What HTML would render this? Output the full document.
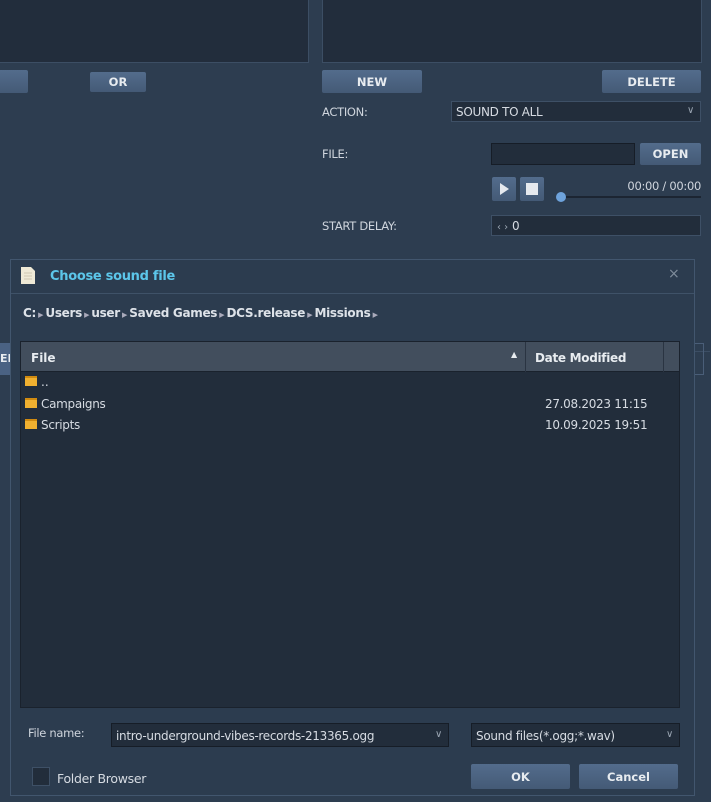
<!DOCTYPE html>
<html><head><meta charset="utf-8"><style>
*{box-sizing:border-box;margin:0;padding:0}
body{width:711px;height:802px;background:#2d3d50;font-family:"DejaVu Sans","Liberation Sans",sans-serif;font-size:12px;color:#d6dbe2;position:relative;overflow:hidden}
.a{position:absolute}
.panel{background:#222d3c;border:1px solid #3c4e64}
.btn{background:linear-gradient(#536c8c,#445a76);border-radius:2px;color:#e8ecf0;font-weight:bold;font-size:11.5px;display:flex;align-items:center;justify-content:center}
.lbl{font-size:11.5px;color:#cfd5dd}
.inp{background:#222d3b;border:1px solid #3e5066}
.chev{position:absolute;right:6px;top:3px;font-size:10px;color:#9aa5b2}
.n{letter-spacing:-0.3px}
</style></head><body>
<div class="a panel" style="left:-2px;top:-2px;width:311px;height:65px"></div>
<div class="a panel" style="left:322px;top:-2px;width:380px;height:65px"></div>
<div class="a btn" style="left:-4px;top:70px;width:32px;height:23px"></div>
<div class="a btn" style="left:90px;top:72px;width:56px;height:20px">OR</div>
<div class="a btn" style="left:322px;top:70px;width:100px;height:23px">NEW</div>
<div class="a btn" style="left:602px;top:70px;width:99px;height:23px">DELETE</div>
<div class="a lbl n" style="left:322px;top:105px">ACTION:</div>
<div class="a inp n" style="left:451px;top:101px;width:250px;height:21px;padding:3px 4px;font-size:12px">SOUND TO ALL<span class="chev">∨</span></div>
<div class="a lbl n" style="left:322px;top:147px">FILE:</div>
<div class="a inp" style="left:491px;top:143px;width:144px;height:22px;border-color:#161d27"></div>
<div class="a btn" style="left:640px;top:143px;width:61px;height:22px">OPEN</div>
<div class="a btn" style="left:492px;top:177px;width:24px;height:24px"><svg width="10" height="12"><path d="M1 0L10 6L1 12Z" fill="#e6e9ee"/></svg></div>
<div class="a btn" style="left:520px;top:177px;width:24px;height:24px"><div style="width:12px;height:12px;background:#e6e9ee"></div></div>
<div class="a n" style="right:10px;top:179px;font-size:11.5px;color:#cfd5dd">00:00 / 00:00</div>
<div class="a" style="left:562px;top:196px;width:139px;height:2px;background:#1c2532"></div>
<div class="a" style="left:556px;top:192px;width:10px;height:10px;border-radius:50%;background:#6ea3dc"></div>
<div class="a lbl n" style="left:322px;top:219px">START DELAY:</div>
<div class="a inp" style="left:491px;top:215px;width:210px;height:21px;padding:3px 5px;font-size:12px"><span style="color:#9aa5b2;font-size:10px">‹ ›</span> 0</div>
<div class="a" style="left:10px;top:351px;width:700px;height:1px;background:#3c4e64"></div>
<div class="a" style="left:0;top:343px;width:10px;height:32px;background:#4a6283;font-size:11px;font-weight:bold;line-height:32px;color:#e8ecf0">EN</div>
<div class="a" style="left:694px;top:343px;width:10px;height:32px;border:1px solid #4a5e78;border-left:none"></div>
<div class="a" style="left:10px;top:259px;width:685px;height:537px;background:#2c3c4f;border:1px solid #42566e"></div>
<div class="a" style="left:11px;top:293px;width:683px;height:1px;background:#3f5268"></div>
<svg class="a" style="left:21px;top:267px" width="14" height="17"><path d="M0 0H10L14 4V17H0Z" fill="#efe9d6"/><path d="M3 6H11M3 9H11M3 12H11" stroke="#cfc8b2" stroke-width="1"/></svg>
<div class="a n" style="left:50px;top:269px;color:#5cc6ea;font-weight:bold;font-size:13px">Choose sound file</div>
<div class="a" style="left:668px;top:266px;color:#7f8c9b;font-size:14px">×</div>
<div class="a n" style="left:23px;top:306px;font-weight:bold;font-size:12px;color:#dde2e8">C:<span style="font-size:7px;color:#aab"> ▶ </span>Users<span style="font-size:7px;color:#aab"> ▶ </span>user<span style="font-size:7px;color:#aab"> ▶ </span>Saved Games<span style="font-size:7px;color:#aab"> ▶ </span>DCS.release<span style="font-size:7px;color:#aab"> ▶ </span>Missions<span style="font-size:7px;color:#aab"> ▶</span></div>
<div class="a" style="left:20px;top:341px;width:660px;height:367px;background:#222d3b;border:1px solid #1a222d"></div>
<div class="a" style="left:21px;top:342px;width:658px;height:30px;background:#424e5d;border-bottom:1px solid #1a222d"></div>
<div class="a" style="left:525px;top:342px;width:1px;height:30px;background:#2a3442"></div>
<div class="a" style="left:663px;top:342px;width:1px;height:30px;background:#2a3442"></div>
<div class="a" style="left:31px;top:351px;font-weight:bold;color:#e8ecf0">File</div>
<div class="a" style="left:511px;top:350px;font-size:8px;color:#e8ecf0">▲</div>
<div class="a n" style="left:535px;top:351px;font-weight:bold;color:#e8ecf0">Date Modified</div>
<div class="a" style="left:25px;top:376px;width:12px;height:10px;background:#f0b030;border-top:2px solid #d08a10"></div>
<div class="a" style="left:41px;top:375px">..</div>
<div class="a" style="left:25px;top:398px;width:12px;height:10px;background:#f0b030;border-top:2px solid #d08a10"></div>
<div class="a n" style="left:41px;top:397px">Campaigns</div>
<div class="a n" style="left:545px;top:397px">27.08.2023 11:15</div>
<div class="a" style="left:25px;top:419px;width:12px;height:10px;background:#f0b030;border-top:2px solid #d08a10"></div>
<div class="a n" style="left:41px;top:418px">Scripts</div>
<div class="a n" style="left:545px;top:418px">10.09.2025 19:51</div>
<div class="a lbl n" style="left:28px;top:726px">File name:</div>
<div class="a inp n" style="left:111px;top:723px;width:338px;height:24px;padding:5px 4px;border-color:#161d27">intro-underground-vibes-records-213365.ogg<span class="chev" style="top:5px">∨</span></div>
<div class="a inp n" style="left:471px;top:723px;width:209px;height:24px;padding:5px 4px;border-color:#161d27">Sound files(*.ogg;*.wav)<span class="chev" style="top:5px">∨</span></div>
<div class="a" style="left:32px;top:767px;width:18px;height:19px;background:#222d3b;border:1px solid #3e5066"></div>
<div class="a n" style="left:57px;top:771px;font-size:12.5px">Folder Browser</div>
<div class="a btn" style="left:471px;top:764px;width:99px;height:25px">OK</div>
<div class="a btn" style="left:579px;top:764px;width:99px;height:25px">Cancel</div>
</body></html>
